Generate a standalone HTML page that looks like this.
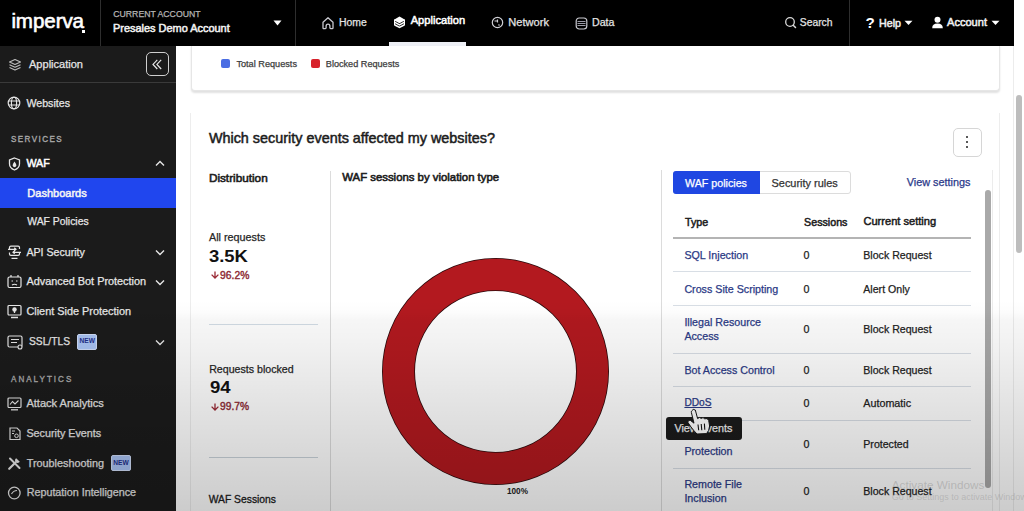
<!DOCTYPE html><html><head><meta charset="utf-8"><style>
html,body{margin:0;padding:0;width:1024px;height:511px;overflow:hidden;background:#fff;font-family:"Liberation Sans",sans-serif;}
.t{position:absolute;line-height:1;white-space:nowrap;}
</style></head><body>
<div style="position:absolute;left:0px;top:0px;width:1024px;height:511px;background:#fff"></div>
<div style="position:absolute;left:1013px;top:46px;width:1px;height:465px;background:#ececec"></div>
<div style="position:absolute;left:1016px;top:95px;width:6px;height:158px;background:#bdbdbd;border-radius:3px"></div>
<div style="position:absolute;left:0px;top:0px;width:1014px;height:46px;background:#000"></div>
<div class="t" style="left:11.4px;top:10.76px;font-size:20.60px;font-weight:400;color:#fff;-webkit-text-stroke:0.6px #fff;letter-spacing:-0.1px">imperva</div>
<div style="position:absolute;left:82px;top:30px;width:3px;height:3px;background:#fff"></div>
<div style="position:absolute;left:100px;top:0px;width:1px;height:46px;background:#2e2e2e"></div>
<div class="t" style="left:113.3px;top:10.24px;font-size:8.70px;font-weight:400;color:#b4b4b4;-webkit-text-stroke:0.25px #b4b4b4;">CURRENT ACCOUNT</div>
<div class="t" style="left:113.0px;top:23.33px;font-size:10.95px;font-weight:400;color:#f2f2f2;-webkit-text-stroke:0.5px #f2f2f2;">Presales Demo Account</div>
<svg style="position:absolute;left:273px;top:20px" width="9" height="6" viewBox="0 0 9 6"><path d="M0.5 0.5 L8.5 0.5 L4.5 5.5 Z" fill="#fff"/></svg>
<div style="position:absolute;left:295px;top:0px;width:1px;height:46px;background:#2e2e2e"></div>
<svg style="position:absolute;left:321px;top:16px" width="15" height="14" viewBox="0 0 15 14"><path d="M2 6.2 L7 1.8 L12 6.2 V12 Q12 12.6 11.2 12.6 H9.6 Q8.9 12.6 8.9 11.8 V10.2 Q8.9 8.2 7 8.2 Q5.1 8.2 5.1 10.2 V11.8 Q5.1 12.6 4.4 12.6 H2.8 Q2 12.6 2 12 Z" fill="none" stroke="#c9c9d0" stroke-width="1.3" stroke-linejoin="round"/></svg>
<div class="t" style="left:339.0px;top:17.58px;font-size:10.42px;font-weight:400;color:#e4e4e4;-webkit-text-stroke:0.25px #e4e4e4;">Home</div>
<svg style="position:absolute;left:394px;top:16px" width="11" height="13" viewBox="0 0 11 13"><path d="M5.5 0.6 L10.6 3.4 V4.4 L5.5 7.2 L0.4 4.4 V3.4 Z" fill="#fff"/><path d="M0.9 6.4 L5.5 8.9 L10.1 6.4 M0.9 9 L5.5 11.5 L10.1 9" fill="none" stroke="#fff" stroke-width="1.5"/><path d="M0.6 3.6 V9.6 M10.4 3.6 V9.6" stroke="#fff" stroke-width="1.2"/></svg>
<div class="t" style="left:410.7px;top:15.17px;font-size:11.14px;font-weight:400;color:#fff;-webkit-text-stroke:0.5px #fff;">Application</div>
<div style="position:absolute;left:389px;top:42px;width:77px;height:4px;background:#eef0f6"></div>
<svg style="position:absolute;left:491px;top:16px" width="13" height="13" viewBox="0 0 13 13"><circle cx="6.5" cy="6.5" r="5.2" fill="none" stroke="#d0d0d6" stroke-width="1.2"/><path d="M3.5 5 H6 M6.5 3.5 V6.5 M7.5 8.5 L8.5 9.5" stroke="#d0d0d6" stroke-width="1.2"/></svg>
<div class="t" style="left:508.3px;top:17.01px;font-size:11.10px;font-weight:400;color:#e4e4e4;-webkit-text-stroke:0.25px #e4e4e4;">Network</div>
<svg style="position:absolute;left:575px;top:17px" width="13" height="13" viewBox="0 0 13 13"><rect x="1.2" y="1" width="10.6" height="11" rx="3" fill="none" stroke="#c9c9d0" stroke-width="1.2"/><path d="M2.5 4.5 H10.5 M2.5 6.5 H10.5 M2.5 8.5 H10.5" stroke="#9a9aa6" stroke-width="1"/></svg>
<div class="t" style="left:592.0px;top:17.38px;font-size:10.65px;font-weight:400;color:#e4e4e4;-webkit-text-stroke:0.25px #e4e4e4;">Data</div>
<svg style="position:absolute;left:784px;top:16px" width="13" height="13" viewBox="0 0 13 13"><circle cx="6" cy="6" r="4.3" fill="none" stroke="#d8d8d8" stroke-width="1.3"/><path d="M9.2 9.2 L11.5 11.5" stroke="#d8d8d8" stroke-width="1.5" stroke-linecap="round"/></svg>
<div class="t" style="left:799.8px;top:18.06px;font-size:10.32px;font-weight:400;color:#e4e4e4;-webkit-text-stroke:0.25px #e4e4e4;">Search</div>
<div style="position:absolute;left:849px;top:0px;width:1px;height:46px;background:#2e2e2e"></div>
<div class="t" style="left:865.6px;top:15.33px;font-size:15.20px;font-weight:700;color:#fff;-webkit-text-stroke:0px #fff;">?</div>
<div class="t" style="left:879.0px;top:17.75px;font-size:10.70px;font-weight:400;color:#f0f0f0;-webkit-text-stroke:0.5px #f0f0f0;">Help</div>
<svg style="position:absolute;left:904px;top:20px" width="9" height="6" viewBox="0 0 9 6"><path d="M0.5 0.8 L8.5 0.8 L4.5 5 Z" fill="#fff"/></svg>
<svg style="position:absolute;left:931px;top:16px" width="13" height="13" viewBox="0 0 13 13"><circle cx="6.5" cy="3.7" r="3" fill="#fff"/><path d="M1.2 12.2 Q1.2 7.6 6.5 7.6 Q11.8 7.6 11.8 12.2 Z" fill="#fff"/></svg>
<div class="t" style="left:947.0px;top:17.43px;font-size:11.07px;font-weight:400;color:#f0f0f0;-webkit-text-stroke:0.5px #f0f0f0;">Account</div>
<svg style="position:absolute;left:991px;top:20px" width="9" height="6" viewBox="0 0 9 6"><path d="M0.5 0.8 L8.5 0.8 L4.5 5 Z" fill="#fff"/></svg>
<div style="position:absolute;left:0px;top:46px;width:176px;height:465px;background:#1b1b1b"></div>
<div style="position:absolute;left:0px;top:82px;width:176px;height:1px;background:#3a3a3a"></div>
<svg style="position:absolute;left:8px;top:58px" width="14" height="14" viewBox="0 0 14 14"><path d="M7 1.5 L12.5 4 L7 6.5 L1.5 4 Z M1.5 6.8 L7 9.3 L12.5 6.8 M1.5 9.6 L7 12.1 L12.5 9.6" fill="none" stroke="#bdbdbd" stroke-width="1.1" stroke-linejoin="round"/></svg>
<div class="t" style="left:29.0px;top:58.86px;font-size:11.04px;font-weight:400;color:#e6e6e6;-webkit-text-stroke:0.25px #e6e6e6;">Application</div>
<div style="position:absolute;left:146px;top:52px;width:23px;height:24px;border:1.3px solid #cfcfcf;border-radius:5px;box-sizing:border-box"></div>
<svg style="position:absolute;left:150px;top:57px" width="15" height="14" viewBox="0 0 15 14"><path d="M7.3 2.8 L3 7.4 L7.3 12 M11.2 2.8 L6.9 7.4 L11.2 12" fill="none" stroke="#e6e6e6" stroke-width="1.2"/></svg>
<svg style="position:absolute;left:7px;top:96px" width="14" height="14" viewBox="0 0 14 14"><circle cx="7" cy="7" r="5.8" fill="none" stroke="#e6e6e6" stroke-width="1.2"/><ellipse cx="7" cy="7" rx="2.6" ry="5.8" fill="none" stroke="#e6e6e6" stroke-width="1.1"/><path d="M1.6 5 H12.4 M1.6 9 H12.4" stroke="#e6e6e6" stroke-width="1.1"/></svg>
<div class="t" style="left:26.4px;top:98.29px;font-size:10.65px;font-weight:400;color:#e6e6e6;-webkit-text-stroke:0.25px #e6e6e6;">Websites</div>
<div class="t" style="left:11.4px;top:133.97px;font-size:9.60px;font-weight:400;color:#a8a8a8;-webkit-text-stroke:0.4px #a8a8a8;letter-spacing:1.7px;transform:scaleX(0.84);transform-origin:0 0">SERVICES</div>
<svg style="position:absolute;left:8px;top:157px" width="13" height="14" viewBox="0 0 13 14"><path d="M6.5 1 L11.5 3 V7 Q11.5 11 6.5 13 Q1.5 11 1.5 7 V3 Z" fill="none" stroke="#e6e6e6" stroke-width="1.3"/><path d="M6.5 4.5 Q8.5 7 8.3 8.6 Q8 10.3 6.5 10.3 Q5 10.3 4.7 8.6 Q4.6 7 6.5 4.5 Z" fill="#e6e6e6"/></svg>
<div class="t" style="left:26.4px;top:158.23px;font-size:10.71px;font-weight:400;color:#fff;-webkit-text-stroke:0.5px #fff;">WAF</div>
<svg style="position:absolute;left:155px;top:160px" width="10" height="7" viewBox="0 0 10 7"><path d="M1 5.5 L5 1.5 L9 5.5" fill="none" stroke="#e6e6e6" stroke-width="1.4"/></svg>
<div style="position:absolute;left:0px;top:178px;width:176px;height:30px;background:#2046ee"></div>
<div class="t" style="left:27.3px;top:187.86px;font-size:11.03px;font-weight:400;color:#f4f4f4;-webkit-text-stroke:0.5px #f4f4f4;">Dashboards</div>
<div class="t" style="left:27.3px;top:217.32px;font-size:10.38px;font-weight:400;color:#e6e6e6;-webkit-text-stroke:0.25px #e6e6e6;">WAF Policies</div>
<svg style="position:absolute;left:7px;top:245px" width="15" height="15" viewBox="0 0 15 15"><path d="M2.5 4 V2.6 Q2.5 1.2 3.9 1.2 H11.1 Q12.5 1.2 12.5 2.6 V4 M12.5 7.5 V9 Q12.5 10.4 11.1 10.4 H3.9 Q2.5 10.4 2.5 9 V7.5" fill="none" stroke="#e6e6e6" stroke-width="1.2"/><path d="M1 4.3 H9 M7.3 2.8 L9 4.3 L7.3 5.8 M14 7.3 H6 M7.7 5.8 L6 7.3 L7.7 8.8 M4.5 13.3 H10.5" fill="none" stroke="#e6e6e6" stroke-width="1.2"/></svg>
<div class="t" style="left:26.4px;top:246.50px;font-size:10.63px;font-weight:400;color:#e6e6e6;-webkit-text-stroke:0.25px #e6e6e6;">API Security</div>
<svg style="position:absolute;left:155px;top:249px" width="10" height="7" viewBox="0 0 10 7"><path d="M1 1.5 L5 5.5 L9 1.5" fill="none" stroke="#e6e6e6" stroke-width="1.4"/></svg>
<svg style="position:absolute;left:7px;top:274px" width="15" height="15" viewBox="0 0 15 15"><rect x="1" y="3" width="13" height="10.5" rx="1.5" fill="none" stroke="#e6e6e6" stroke-width="1.2"/><path d="M4 3 V1 M11 3 V1 M4.5 7 H6 M9 7 H10.5 M5 11 Q7.5 9.5 10 11" stroke="#e6e6e6" stroke-width="1.2" fill="none"/></svg>
<div class="t" style="left:26.4px;top:275.89px;font-size:10.88px;font-weight:400;color:#e6e6e6;-webkit-text-stroke:0.25px #e6e6e6;">Advanced Bot Protection</div>
<svg style="position:absolute;left:155px;top:279px" width="10" height="7" viewBox="0 0 10 7"><path d="M1 1.5 L5 5.5 L9 1.5" fill="none" stroke="#e6e6e6" stroke-width="1.4"/></svg>
<svg style="position:absolute;left:7px;top:304px" width="15" height="15" viewBox="0 0 15 15"><rect x="1" y="1.5" width="13" height="9.5" rx="1" fill="none" stroke="#e6e6e6" stroke-width="1.2"/><circle cx="7.5" cy="5.5" r="2.2" fill="#e6e6e6"/><path d="M7.5 6 V9 M4 13.5 H11" stroke="#e6e6e6" stroke-width="1.3"/></svg>
<div class="t" style="left:26.4px;top:305.77px;font-size:10.90px;font-weight:400;color:#e6e6e6;-webkit-text-stroke:0.25px #e6e6e6;">Client Side Protection</div>
<svg style="position:absolute;left:7px;top:335px" width="17" height="16" viewBox="0 0 17 16"><rect x="1" y="1" width="14" height="11" rx="1.5" fill="none" stroke="#e6e6e6" stroke-width="1.2"/><path d="M4 4.5 H12 M4 7.5 H10" stroke="#e6e6e6" stroke-width="1.1"/><circle cx="13" cy="12" r="2" fill="#1b1b1b" stroke="#e6e6e6" stroke-width="1.1"/></svg>
<div class="t" style="left:29.0px;top:337.33px;font-size:10.24px;font-weight:400;color:#e6e6e6;-webkit-text-stroke:0.25px #e6e6e6;">SSL/TLS</div>
<div style="position:absolute;left:77px;top:334px;width:20px;height:15.5px;background:#a9c3f4;border:1px solid #cfdcf7;border-radius:2px;box-sizing:border-box"></div>
<div class="t" style="left:79.6px;top:338.41px;font-size:6.60px;font-weight:700;color:#1f2f8a;-webkit-text-stroke:0px #1f2f8a;">NEW</div>
<svg style="position:absolute;left:155px;top:339px" width="10" height="7" viewBox="0 0 10 7"><path d="M1 1.5 L5 5.5 L9 1.5" fill="none" stroke="#e6e6e6" stroke-width="1.4"/></svg>
<div class="t" style="left:11.4px;top:373.97px;font-size:9.60px;font-weight:400;color:#a8a8a8;-webkit-text-stroke:0.4px #a8a8a8;letter-spacing:2.4px;transform:scaleX(0.84);transform-origin:0 0">ANALYTICS</div>
<svg style="position:absolute;left:7px;top:397px" width="15" height="14" viewBox="0 0 15 14"><rect x="1" y="1" width="13" height="9.5" rx="1" fill="none" stroke="#e6e6e6" stroke-width="1.2"/><path d="M3 7.5 L5.5 4.5 L8 7 L11.5 3.5" fill="none" stroke="#e6e6e6" stroke-width="1.1"/><path d="M4 12.8 H11" stroke="#e6e6e6" stroke-width="1.3"/></svg>
<div class="t" style="left:26.4px;top:397.93px;font-size:11.07px;font-weight:400;color:#e6e6e6;-webkit-text-stroke:0.25px #e6e6e6;">Attack Analytics</div>
<svg style="position:absolute;left:9px;top:427px" width="13" height="14" viewBox="0 0 13 14"><path d="M1 1 H8 L11 4 V12.5 H1 Z" fill="none" stroke="#e6e6e6" stroke-width="1.2"/><path d="M3 4 H6 M3 6.5 H5" stroke="#e6e6e6" stroke-width="1"/><circle cx="7.5" cy="8.8" r="1.8" fill="none" stroke="#e6e6e6" stroke-width="1"/></svg>
<div class="t" style="left:26.4px;top:428.09px;font-size:10.77px;font-weight:400;color:#e6e6e6;-webkit-text-stroke:0.25px #e6e6e6;">Security Events</div>
<svg style="position:absolute;left:7px;top:456px" width="15" height="15" viewBox="0 0 15 15"><path d="M2.2 12.8 L8.5 6.5" fill="none" stroke="#e6e6e6" stroke-width="2.2" stroke-linecap="round"/><path d="M3 2.5 L12.5 12" fill="none" stroke="#e6e6e6" stroke-width="2" stroke-linecap="round"/><path d="M9.2 2.2 A2.6 2.6 0 1 0 12.8 5.8 L11.5 4.5 L10.5 3.5 Z" fill="#e6e6e6"/></svg>
<div class="t" style="left:26.7px;top:458.03px;font-size:10.83px;font-weight:400;color:#e6e6e6;-webkit-text-stroke:0.25px #e6e6e6;">Troubleshooting</div>
<div style="position:absolute;left:111px;top:455px;width:20px;height:15.5px;background:#a9c3f4;border:1px solid #cfdcf7;border-radius:2px;box-sizing:border-box"></div>
<div class="t" style="left:113.3px;top:459.61px;font-size:6.60px;font-weight:700;color:#1f2f8a;-webkit-text-stroke:0px #1f2f8a;">NEW</div>
<svg style="position:absolute;left:7px;top:486px" width="15" height="14" viewBox="0 0 15 14"><circle cx="7.3" cy="7" r="5.8" fill="none" stroke="#e6e6e6" stroke-width="1.3"/><path d="M4.5 8 Q6.5 4.5 10 4.5" fill="none" stroke="#e6e6e6" stroke-width="1.2"/></svg>
<div class="t" style="left:26.7px;top:487.49px;font-size:10.76px;font-weight:400;color:#e6e6e6;-webkit-text-stroke:0.25px #e6e6e6;">Reputation Intelligence</div>
<div style="position:absolute;left:191px;top:46px;width:809px;height:45px;background:#fff;border:1px solid #e6e6e6;border-top:none;border-radius:0 0 4px 4px;box-shadow:0 1.5px 2px rgba(0,0,0,0.12);box-sizing:border-box"></div>
<div style="position:absolute;left:221px;top:59px;width:9px;height:9px;background:#4a6de3;border-radius:2px"></div>
<div class="t" style="left:236.4px;top:59.55px;font-size:9.16px;font-weight:400;color:#3d3d3d;-webkit-text-stroke:0.25px #3d3d3d;">Total Requests</div>
<div style="position:absolute;left:311px;top:59px;width:9px;height:9px;background:#d7222b;border-radius:2px"></div>
<div class="t" style="left:325.8px;top:59.56px;font-size:9.14px;font-weight:400;color:#3d3d3d;-webkit-text-stroke:0.25px #3d3d3d;">Blocked Requests</div>
<div style="position:absolute;left:190px;top:113px;width:810px;height:420px;background:#fff;border:1px solid #ededed;border-top:none;border-radius:0 0 4px 4px;box-sizing:border-box"></div>
<div class="t" style="left:208.9px;top:130.61px;font-size:14.40px;font-weight:400;color:#1c1c1c;-webkit-text-stroke:0.5px #1c1c1c;">Which security events affected my websites?</div>
<div style="position:absolute;left:953px;top:128px;width:29px;height:29px;border:1px solid #d6d6d6;border-radius:5px;box-sizing:border-box;background:#fff"></div>
<div style="position:absolute;left:966px;top:136px;width:2.4px;height:2.4px;background:#222;border-radius:50%"></div>
<div style="position:absolute;left:966px;top:141px;width:2.4px;height:2.4px;background:#222;border-radius:50%"></div>
<div style="position:absolute;left:966px;top:146px;width:2.4px;height:2.4px;background:#222;border-radius:50%"></div>
<div class="t" style="left:208.9px;top:171.75px;font-size:11.76px;font-weight:400;color:#1c1c1c;-webkit-text-stroke:0.6px #1c1c1c;">Distribution</div>
<div style="position:absolute;left:330px;top:171px;width:1px;height:340px;background:#dcdcdc"></div>
<div class="t" style="left:342.3px;top:172.08px;font-size:11.36px;font-weight:400;color:#1c1c1c;-webkit-text-stroke:0.6px #1c1c1c;">WAF sessions by violation type</div>
<div class="t" style="left:209.0px;top:232.06px;font-size:10.79px;font-weight:400;color:#262626;-webkit-text-stroke:0.25px #262626;">All requests</div>
<div class="t" style="left:209.4px;top:248.89px;font-size:16.90px;font-weight:700;color:#111;-webkit-text-stroke:0px #111;transform:scaleX(1.09);transform-origin:0 0">3.5K</div>
<svg style="position:absolute;left:210px;top:270px" width="10" height="10" viewBox="0 0 10 10"><path d="M5 1.6 V7.6 M1.6 4.6 L5 8 L8.4 4.6" fill="none" stroke="#9a2a35" stroke-width="1.3"/></svg>
<div class="t" style="left:220.1px;top:270.68px;font-size:10.30px;font-weight:400;color:#8e2b35;-webkit-text-stroke:0.4px #8e2b35;">96.2%</div>
<div style="position:absolute;left:209px;top:324px;width:109px;height:1px;background:#d3dde6"></div>
<div class="t" style="left:209.2px;top:363.79px;font-size:10.64px;font-weight:400;color:#262626;-webkit-text-stroke:0.25px #262626;">Requests blocked</div>
<div class="t" style="left:209.5px;top:380.29px;font-size:16.90px;font-weight:700;color:#111;-webkit-text-stroke:0px #111;transform:scaleX(1.1);transform-origin:0 0">94</div>
<svg style="position:absolute;left:210px;top:401.6px" width="10" height="10" viewBox="0 0 10 10"><path d="M5 1.6 V7.6 M1.6 4.6 L5 8 L8.4 4.6" fill="none" stroke="#9a2a35" stroke-width="1.3"/></svg>
<div class="t" style="left:220.1px;top:402.37px;font-size:10.20px;font-weight:400;color:#8e2b35;-webkit-text-stroke:0.4px #8e2b35;">99.7%</div>
<div style="position:absolute;left:209px;top:457px;width:109px;height:1px;background:#c9d3da"></div>
<div class="t" style="left:208.7px;top:495.35px;font-size:10.34px;font-weight:400;color:#1c1c1c;-webkit-text-stroke:0.3px #1c1c1c;">WAF Sessions</div>
<svg style="position:absolute;left:380px;top:256px" width="232" height="232" viewBox="0 0 232 232"><circle cx="115.5" cy="115.5" r="97" fill="none" stroke="#2a0a0c" stroke-width="33"/><circle cx="115.5" cy="115.5" r="97" fill="none" stroke="#b3191f" stroke-width="31.4"/></svg>
<div class="t" style="left:507.0px;top:487.65px;font-size:8.21px;font-weight:700;color:#222;-webkit-text-stroke:0px #222;">100%</div>
<div style="position:absolute;left:661px;top:170px;width:1px;height:341px;background:#dcdcdc"></div>
<div style="position:absolute;left:992px;top:170px;width:1px;height:341px;background:#ececec"></div>
<div style="position:absolute;left:985px;top:190px;width:6px;height:298px;background:#a9a9a9;border-radius:3px"></div>
<div style="position:absolute;left:673px;top:171px;width:178px;height:23px;border:1px solid #dcdcdc;border-radius:3px;box-sizing:border-box;background:#fff"></div>
<div style="position:absolute;left:673px;top:171px;width:87px;height:23px;background:#1f47e2;border-radius:3px 0 0 3px"></div>
<div class="t" style="left:685.0px;top:177.95px;font-size:10.69px;font-weight:400;color:#fff;-webkit-text-stroke:0.25px #fff;">WAF policies</div>
<div class="t" style="left:771.5px;top:177.74px;font-size:10.94px;font-weight:400;color:#333;-webkit-text-stroke:0.25px #333;">Security rules</div>
<div class="t" style="left:906.7px;top:177.11px;font-size:10.86px;font-weight:400;color:#2b3a8a;-webkit-text-stroke:0.25px #2b3a8a;">View settings</div>
<div class="t" style="left:685.0px;top:216.64px;font-size:10.70px;font-weight:400;color:#1c1c1c;-webkit-text-stroke:0.5px #1c1c1c;">Type</div>
<div class="t" style="left:804.1px;top:216.64px;font-size:10.70px;font-weight:400;color:#1c1c1c;-webkit-text-stroke:0.5px #1c1c1c;">Sessions</div>
<div class="t" style="left:863.4px;top:216.40px;font-size:11.10px;font-weight:400;color:#1c1c1c;-webkit-text-stroke:0.5px #1c1c1c;">Current setting</div>
<div style="position:absolute;left:673px;top:237px;width:298px;height:2px;background:#b4b4b4"></div>
<div style="position:absolute;left:673px;top:271px;width:298px;height:1px;background:#d8dee5"></div>
<div style="position:absolute;left:673px;top:305px;width:298px;height:1px;background:#d8dee5"></div>
<div style="position:absolute;left:673px;top:353px;width:298px;height:1px;background:#d8dee5"></div>
<div style="position:absolute;left:673px;top:386px;width:298px;height:1px;background:#d8dee5"></div>
<div style="position:absolute;left:673px;top:420px;width:298px;height:1px;background:#d8dee5"></div>
<div style="position:absolute;left:673px;top:468px;width:298px;height:1px;background:#d8dee5"></div>
<div class="t" style="left:684.4px;top:250.04px;font-size:10.70px;font-weight:400;color:#2b3a86;-webkit-text-stroke:0.25px #2b3a86;">SQL Injection</div>
<div class="t" style="left:803.5px;top:250.24px;font-size:10.70px;font-weight:400;color:#222;-webkit-text-stroke:0.25px #222;">0</div>
<div class="t" style="left:863.3px;top:250.33px;font-size:10.60px;font-weight:400;color:#222;-webkit-text-stroke:0.25px #222;">Block Request</div>
<div class="t" style="left:684.4px;top:283.84px;font-size:10.70px;font-weight:400;color:#2b3a86;-webkit-text-stroke:0.25px #2b3a86;">Cross Site Scripting</div>
<div class="t" style="left:803.5px;top:283.94px;font-size:10.70px;font-weight:400;color:#222;-webkit-text-stroke:0.25px #222;">0</div>
<div class="t" style="left:863.3px;top:284.03px;font-size:10.60px;font-weight:400;color:#222;-webkit-text-stroke:0.25px #222;">Alert Only</div>
<div class="t" style="left:684.4px;top:316.74px;font-size:10.70px;font-weight:400;color:#2b3a86;-webkit-text-stroke:0.25px #2b3a86;">Illegal Resource</div>
<div class="t" style="left:684.4px;top:331.44px;font-size:10.70px;font-weight:400;color:#2b3a86;-webkit-text-stroke:0.25px #2b3a86;">Access</div>
<div class="t" style="left:803.5px;top:323.94px;font-size:10.70px;font-weight:400;color:#222;-webkit-text-stroke:0.25px #222;">0</div>
<div class="t" style="left:863.3px;top:324.03px;font-size:10.60px;font-weight:400;color:#222;-webkit-text-stroke:0.25px #222;">Block Request</div>
<div class="t" style="left:684.4px;top:364.64px;font-size:10.70px;font-weight:400;color:#2b3a86;-webkit-text-stroke:0.25px #2b3a86;">Bot Access Control</div>
<div class="t" style="left:803.5px;top:364.74px;font-size:10.70px;font-weight:400;color:#222;-webkit-text-stroke:0.25px #222;">0</div>
<div class="t" style="left:863.3px;top:364.83px;font-size:10.60px;font-weight:400;color:#222;-webkit-text-stroke:0.25px #222;">Block Request</div>
<div class="t" style="left:684.4px;top:397.97px;font-size:10.20px;font-weight:400;color:#2b3a86;-webkit-text-stroke:0.25px #2b3a86;text-decoration:underline">DDoS</div>
<div class="t" style="left:803.5px;top:397.54px;font-size:10.70px;font-weight:400;color:#222;-webkit-text-stroke:0.25px #222;">0</div>
<div class="t" style="left:863.3px;top:397.50px;font-size:10.75px;font-weight:400;color:#222;-webkit-text-stroke:0.25px #222;">Automatic</div>
<div class="t" style="left:684.4px;top:445.94px;font-size:10.70px;font-weight:400;color:#2b3a86;-webkit-text-stroke:0.25px #2b3a86;">Protection</div>
<div class="t" style="left:803.5px;top:438.94px;font-size:10.70px;font-weight:400;color:#222;-webkit-text-stroke:0.25px #222;">0</div>
<div class="t" style="left:863.3px;top:439.03px;font-size:10.60px;font-weight:400;color:#222;-webkit-text-stroke:0.25px #222;">Protected</div>
<div class="t" style="left:684.4px;top:478.74px;font-size:10.70px;font-weight:400;color:#2b3a86;-webkit-text-stroke:0.25px #2b3a86;">Remote File</div>
<div class="t" style="left:684.4px;top:493.44px;font-size:10.70px;font-weight:400;color:#2b3a86;-webkit-text-stroke:0.25px #2b3a86;">Inclusion</div>
<div class="t" style="left:803.5px;top:485.94px;font-size:10.70px;font-weight:400;color:#222;-webkit-text-stroke:0.25px #222;">0</div>
<div class="t" style="left:863.3px;top:486.03px;font-size:10.60px;font-weight:400;color:#222;-webkit-text-stroke:0.25px #222;">Block Request</div>
<div style="position:absolute;left:666px;top:417px;width:76px;height:23px;background:#1b1b1b;border-radius:3px"></div>
<div class="t" style="left:674.4px;top:423.16px;font-size:10.80px;font-weight:400;color:#f2f2f2;-webkit-text-stroke:0.25px #f2f2f2;">View events</div>
<svg style="position:absolute;left:680px;top:400px" width="40" height="40" viewBox="680 400 40 40"><path d="M691.6 411 Q693 408.3 695.3 410 L697.6 418.6 Q699.6 416.4 701.2 418.4 Q703.1 416.6 704.7 418.8 Q707.2 417.6 708.7 420.4 L709.6 426 Q709.2 431 706.6 433.6 L697 434 Q694 431 691 427 L688 422.6 Q687.4 419.8 690.2 420.2 L694 423.2 L691.4 412.6 Q691.2 411.6 691.6 411 Z" fill="#fff" stroke="#161616" stroke-width="1" stroke-linejoin="round"/><path d="M698 424.5 L698.7 430.2 M701.2 424 L701.8 430.2 M704.4 423.6 L704.8 429.8" stroke="#111" stroke-width="1.1"/></svg>
<div class="t" style="left:891.8px;top:478.68px;font-size:11.72px;font-weight:400;color:rgba(150,150,150,0.35);-webkit-text-stroke:0px rgba(150,150,150,0.35);">Activate Windows</div>
<div class="t" style="left:891.8px;top:492.98px;font-size:9.00px;font-weight:400;color:rgba(150,150,150,0.3);-webkit-text-stroke:0px rgba(150,150,150,0.3);">Go to Settings to activate Windows.</div>
<div style="position:absolute;left:0px;top:0px;width:1024px;height:511px;pointer-events:none;background:linear-gradient(to bottom, rgba(0,0,0,0) 0px, rgba(0,0,0,0) 300px, rgba(0,0,0,0.012) 312px, rgba(0,0,0,0.035) 320px, rgba(0,0,0,0.06) 350px, rgba(0,0,0,0.1) 395px, rgba(0,0,0,0.145) 445px, rgba(0,0,0,0.2) 511px)"></div>
</body></html>
